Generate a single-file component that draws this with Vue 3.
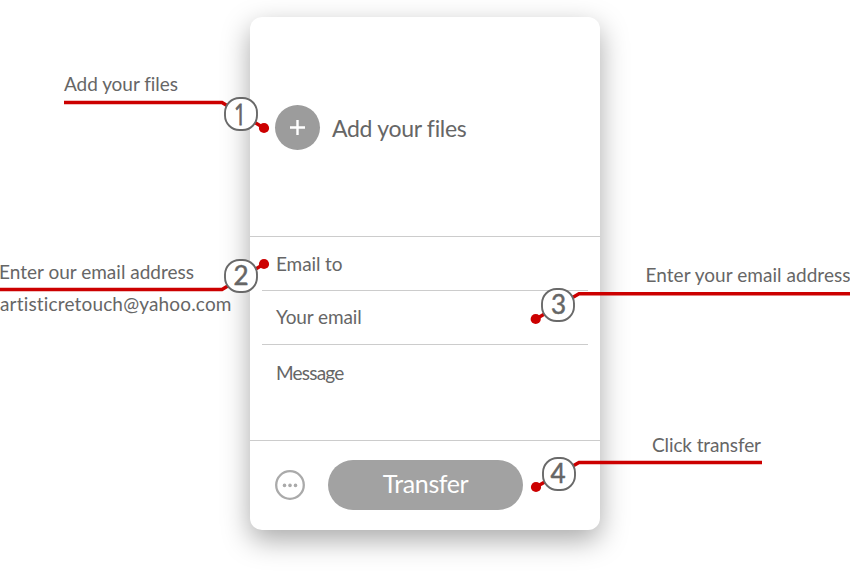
<script setup>
const badges = [
  { n: 1, x: 241, y: 114, dx: -1, dy: 11 },
  { n: 2, x: 241, y: 276, dx: 0, dy: 8.7 },
  { n: 3, x: 558, y: 305, dx: 0.5, dy: 9 },
  { n: 4, x: 559, y: 474, dx: -1, dy: 9.3 },
]
const leaders = [
  { d: 'M64 102.5H222L264 128', x: 264, y: 128 },
  { d: 'M0 289.5H222L264 264', x: 264, y: 264 },
  { d: 'M850 293.8H579L536 319', x: 535.7, y: 319 },
  { d: 'M762 462.5H579L536 487', x: 536, y: 487 },
]
const notes = [
  { t: 'Add your files', x: 64, y: 91.4, w: 114 },
  { t: 'Enter our email address', x: -1, y: 279.4, w: 195 },
  { t: 'artisticretouch@yahoo.com', x: 0, y: 311.4, w: 231.5 },
  { t: 'Enter your email address', x: 645.5, y: 282.4, w: 205 },
  { t: 'Click transfer', x: 652, y: 452.4, w: 109 },
]
</script>

<template>
  <main class="page">
    <section class="card">
      <div class="files">
        <button class="add" aria-label="Add">
          <svg width="45" height="45" viewBox="0 0 45 45">
            <path d="M22.5 15v15M15 22.5h15" stroke="#fff" stroke-width="2.4" />
          </svg>
        </button>
        <span class="files-label">Add your files</span>
      </div>
      <div class="fields">
        <div class="field to"><span>Email to</span></div>
        <div class="field from"><span>Your email</span></div>
        <div class="field message"><span>Message</span></div>
      </div>
      <div class="actions">
        <svg width="30" height="30" viewBox="0 0 30 30">
          <circle cx="15" cy="15" r="13.8" fill="none" stroke="#aaa" stroke-width="2.3" />
          <g fill="#aaa">
            <circle cx="9.5" cy="15.4" r="1.8" />
            <circle cx="15" cy="15.4" r="1.8" />
            <circle cx="20.5" cy="15.4" r="1.8" />
          </g>
        </svg>
        <button class="transfer"><span>Transfer</span></button>
      </div>
    </section>

    <svg class="callouts" width="850" height="572" viewBox="0 0 850 572">
      <g v-for="l in leaders" :key="l.d">
        <path :d="l.d" fill="none" stroke="#c00" stroke-width="3.5" />
        <circle :cx="l.x" :cy="l.y" r="5.1" fill="#c00" />
      </g>
      <g v-for="b in badges" :key="b.n" :transform="`translate(${b.x} ${b.y})`">
        <rect x="-16" y="-16" width="32" height="32" rx="14.5" fill="#fff" stroke="#696969" stroke-width="1.9" />
        <g :transform="`translate(${b.dx} ${b.dy})`">
          <text class="num" :class="{ one: b.n === 1 }" :transform="b.n === 1 ? 'scale(0.7 1)' : null" text-anchor="middle">{{ b.n }}</text>
        </g>
      </g>
      <text v-for="n in notes" :key="n.t" class="note" :x="n.x" :y="n.y" :textLength="n.w">{{ n.t }}</text>
    </svg>
  </main>
</template>

<style>
body { margin: 0; background: #fff; }
</style>

<style scoped>
.page {
  position: relative;
  box-sizing: border-box;
  width: 850px;
  height: 572px;
  padding: 17px 0 0 250px;
  overflow: hidden;
  color: #666;
  font-family: Lato, "Gill Sans", sans-serif;
  font-variant-ligatures: none;
}
.card {
  display: flex;
  flex-direction: column;
  width: 350px;
  height: 513px;
  border-radius: 12px;
  background: #fff;
  box-shadow: 0 10px 28px rgba(0, 0, 0, 0.34);
}
.files {
  box-sizing: border-box;
  display: flex;
  align-items: center;
  gap: 12px;
  height: 220px;
  padding: 2px 0 0 25px;
  border-bottom: 1px solid #ccc;
}
.add, .transfer {
  padding: 0;
  border: 0;
  font-family: inherit;
}
.add {
  width: 45px;
  height: 45px;
  border-radius: 50%;
  background: #9c9c9c;
}
.add svg { display: block; }
.files-label { font-size: 23px; letter-spacing: -0.3px; padding-top: 1px; }
.fields { height: 203px; border-bottom: 1px solid #ccc; }
.field {
  box-sizing: border-box;
  display: flex;
  align-items: center;
  height: 54px;
  margin: 0 12px;
  padding-left: 14px;
  border-bottom: 1px solid #ccc;
  font-size: 19px;
  letter-spacing: -0.1px;
}
.field.from { padding-bottom: 2px; }
.field.message { border-bottom: 0; padding-top: 1px; letter-spacing: -0.8px; }
.actions {
  display: flex;
  align-items: center;
  gap: 23px;
  height: 87px;
  padding: 0 0 2px 25px;
}
.transfer {
  width: 195px;
  height: 50px;
  padding-bottom: 3px;
  border-radius: 25px;
  background: #a2a2a2;
  color: #fff;
  font-size: 25px;
  letter-spacing: -0.4px;
}
.callouts { position: absolute; left: 0; top: 0; }
.note { fill: #666; font-size: 19px; }
.num { fill: #666; stroke: #666; stroke-width: 0.5; font-size: 26px; }
.one { font-family: "Open Sans", sans-serif; font-size: 30px; stroke-width: 0.8; }
</style>
